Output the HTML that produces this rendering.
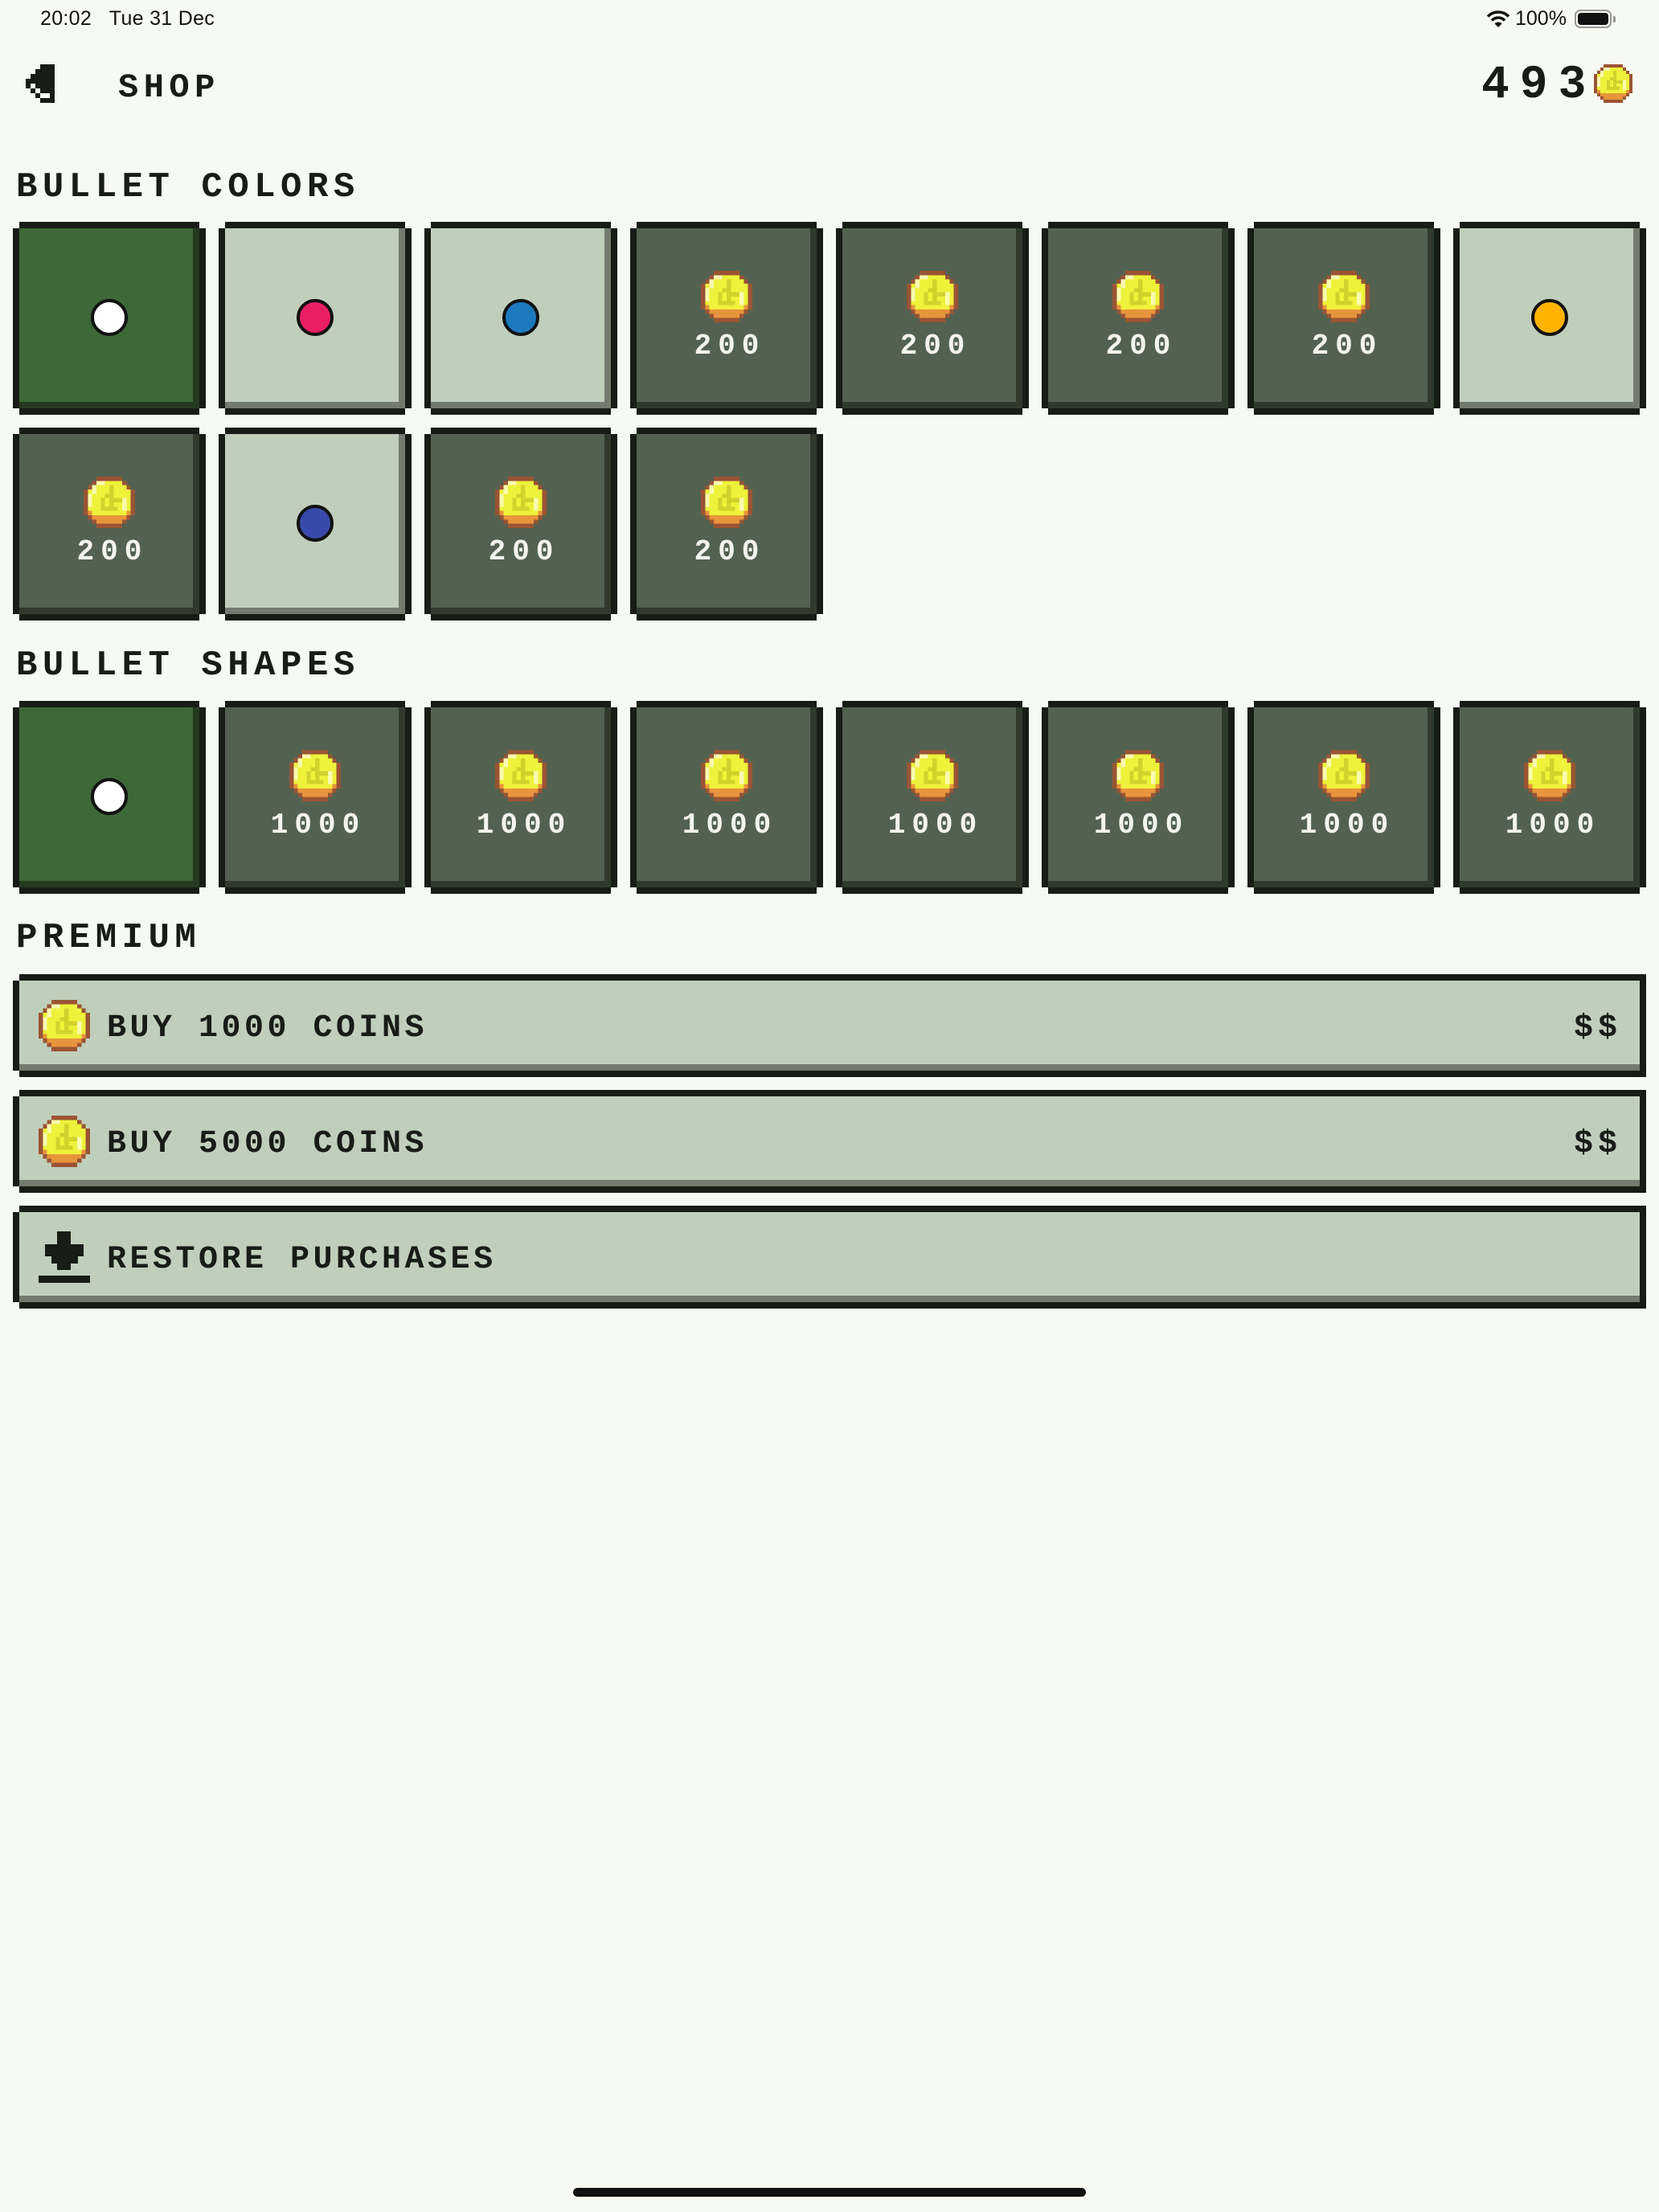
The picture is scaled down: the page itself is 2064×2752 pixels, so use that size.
<!DOCTYPE html>
<html><head><meta charset="utf-8"><style>
*{margin:0;padding:0;box-sizing:border-box}
body{width:2064px;height:2752px;background:#f7faf2;position:relative;overflow:hidden;font-family:"Liberation Mono",monospace;color:#181c17}
.a{position:absolute}
.h{position:absolute;font-weight:bold;font-size:44px;line-height:44px;letter-spacing:6.5px;white-space:nowrap}
.t{position:absolute;width:240px;height:240px}
.t .f1{position:absolute;left:8px;top:0;width:224px;height:240px;background:#181c17}
.t .f2{position:absolute;left:0;top:8px;width:240px;height:224px;background:#181c17}
.t .in{position:absolute;left:8px;top:8px;width:224px;height:224px}
.g .in{background:#3d6837;box-shadow:inset -8px -8px 0 #24391f}
.l .in{background:#c0cfbb;box-shadow:inset -8px -8px 0 #737a6e}
.d .in{background:#536250;box-shadow:inset -8px -8px 0 #2f3a2d}
.dot{position:absolute;left:97px;top:96px;width:46px;height:46px;border-radius:50%;border:4px solid #111}
.cn{position:absolute;left:88px;top:61px;width:64px;height:64px}
.pr{position:absolute;left:0;width:240px;top:137px;text-align:center;color:#f4f4ee;font-weight:bold;font-size:36px;line-height:36px;letter-spacing:8px;padding-left:8px}
.b{position:absolute;left:16px;width:2032px;height:128px}
.b .f1{position:absolute;left:8px;top:0;right:0;height:128px;background:#181c17}
.b .f2{position:absolute;left:0;top:8px;right:0;height:112px;background:#181c17}
.b .in{position:absolute;left:8px;top:8px;right:8px;height:112px;background:#c0cfbb;box-shadow:inset 0 -8px 0 #737a6e}
.bt{position:absolute;left:117px;top:48px;font-weight:bold;font-size:40px;line-height:40px;letter-spacing:4.5px;white-space:nowrap}
.bc{position:absolute;left:32px;top:32px;width:64px;height:64px}
.dl{position:absolute;right:30px;top:48px;font-weight:bold;font-size:40px;line-height:40px;letter-spacing:6px}
</style></head><body>
<svg width="0" height="0" style="position:absolute"><defs><symbol id="coin" viewBox="0 0 12 12" shape-rendering="crispEdges">
<rect x="3" y="1" width="6" height="10" fill="#eef23a"/><rect x="2" y="2" width="8" height="8" fill="#eef23a"/><rect x="1" y="3" width="10" height="6" fill="#eef23a"/>
<rect x="3" y="1" width="2" height="1" fill="#fafab0"/><rect x="2" y="2" width="1" height="2" fill="#fafab0"/><rect x="1" y="4" width="1" height="3" fill="#fafab0"/><rect x="9" y="5" width="1" height="3" fill="#fafab0"/>
<rect x="6" y="2" width="1" height="6" fill="#d2d22c"/><rect x="5" y="4" width="1" height="1" fill="#d2d22c"/><rect x="4" y="5" width="1" height="3" fill="#d2d22c"/><rect x="7" y="5" width="2" height="1" fill="#d2d22c"/><rect x="5" y="7" width="3" height="1" fill="#d2d22c"/>
<rect x="3" y="10" width="6" height="1" fill="#e8943c"/><rect x="1" y="8" width="1" height="1" fill="#e8943c"/><rect x="10" y="8" width="1" height="1" fill="#e8943c"/><rect x="2" y="9" width="8" height="1" fill="#e8943c"/>
<g fill="#9a5434"><rect x="3" y="0" width="6" height="1"/><rect x="2" y="1" width="1" height="1"/><rect x="9" y="1" width="1" height="1"/><rect x="1" y="2" width="1" height="1"/><rect x="10" y="2" width="1" height="1"/><rect x="0" y="3" width="1" height="6"/><rect x="11" y="3" width="1" height="6"/><rect x="1" y="9" width="1" height="1"/><rect x="10" y="9" width="1" height="1"/><rect x="2" y="10" width="1" height="1"/><rect x="9" y="10" width="1" height="1"/><rect x="3" y="11" width="6" height="1"/></g>
</symbol></defs></svg>

<div class="a" style="left:50px;top:8px;font-family:'Liberation Sans',sans-serif;font-size:25px;line-height:30px;color:#111;letter-spacing:0.3px">20:02&nbsp;&nbsp;&nbsp;Tue 31 Dec</div>
<svg class="a" style="left:1849px;top:13px" width="30" height="21" viewBox="0 0 30 21"><path d="M2 7.5A18 18 0 0 1 28 7.5" stroke="#111" stroke-width="3.5" fill="none"/><path d="M7 12.5A11 11 0 0 1 23 12.5" stroke="#111" stroke-width="3.5" fill="none"/><path d="M15 21L10.5 16.5A6 6 0 0 1 19.5 16.5Z" fill="#111"/></svg>
<div class="a" style="left:1885px;top:8px;font-family:'Liberation Sans',sans-serif;font-size:25px;line-height:30px;color:#111">100%</div>
<div class="a" style="left:1959px;top:12px;width:46px;height:23px;border:2px solid #999;border-radius:7px;padding:2px"><div style="width:100%;height:100%;background:#111;border-radius:4px"></div></div>
<div class="a" style="left:2007px;top:20px;width:3px;height:8px;background:#999;border-radius:0 2px 2px 0"></div>

<svg class="a" style="left:32px;top:80px" width="36" height="48" viewBox="32 80 36 48" shape-rendering="crispEdges"><path fill="#181c17" d="M50 80H68V128H50V122H44V116H38V110H32V98H38V92H44V86H50Z"/><path fill="#fff" d="M38 104H44V110H50V116H62V122H50V116H44V110H38Z"/></svg>
<div class="h" style="left:147px;top:88px;font-size:42px;line-height:42px">SHOP</div>
<div class="a" style="left:1843px;top:78px;font-weight:bold;font-size:58px;line-height:58px;letter-spacing:13px">493</div>
<svg class="a" style="left:1983px;top:80px" width="48" height="48"><use href="#coin"/></svg>

<div class="h" style="left:20px;top:211px">BULLET COLORS</div>

<div class="t g" style="left:16px;top:276px"><div class="f1"></div><div class="f2"></div><div class="in"></div><div class="dot" style="background:#fff"></div></div>
<div class="t l" style="left:272px;top:276px"><div class="f1"></div><div class="f2"></div><div class="in"></div><div class="dot" style="background:#e91e63"></div></div>
<div class="t l" style="left:528px;top:276px"><div class="f1"></div><div class="f2"></div><div class="in"></div><div class="dot" style="background:#1e7abf"></div></div>
<div class="t d" style="left:784px;top:276px"><div class="f1"></div><div class="f2"></div><div class="in"></div><svg class="cn"><use href="#coin"/></svg><div class="pr">200</div></div>
<div class="t d" style="left:1040px;top:276px"><div class="f1"></div><div class="f2"></div><div class="in"></div><svg class="cn"><use href="#coin"/></svg><div class="pr">200</div></div>
<div class="t d" style="left:1296px;top:276px"><div class="f1"></div><div class="f2"></div><div class="in"></div><svg class="cn"><use href="#coin"/></svg><div class="pr">200</div></div>
<div class="t d" style="left:1552px;top:276px"><div class="f1"></div><div class="f2"></div><div class="in"></div><svg class="cn"><use href="#coin"/></svg><div class="pr">200</div></div>
<div class="t l" style="left:1808px;top:276px"><div class="f1"></div><div class="f2"></div><div class="in"></div><div class="dot" style="background:#ffb300"></div></div>

<div class="t d" style="left:16px;top:532px"><div class="f1"></div><div class="f2"></div><div class="in"></div><svg class="cn"><use href="#coin"/></svg><div class="pr">200</div></div>
<div class="t l" style="left:272px;top:532px"><div class="f1"></div><div class="f2"></div><div class="in"></div><div class="dot" style="background:#3949ab"></div></div>
<div class="t d" style="left:528px;top:532px"><div class="f1"></div><div class="f2"></div><div class="in"></div><svg class="cn"><use href="#coin"/></svg><div class="pr">200</div></div>
<div class="t d" style="left:784px;top:532px"><div class="f1"></div><div class="f2"></div><div class="in"></div><svg class="cn"><use href="#coin"/></svg><div class="pr">200</div></div>

<div class="h" style="left:20px;top:806px">BULLET SHAPES</div>

<div class="t g" style="left:16px;top:872px"><div class="f1"></div><div class="f2"></div><div class="in"></div><div class="dot" style="background:#fff"></div></div>
<div class="t d" style="left:272px;top:872px"><div class="f1"></div><div class="f2"></div><div class="in"></div><svg class="cn"><use href="#coin"/></svg><div class="pr">1000</div></div>
<div class="t d" style="left:528px;top:872px"><div class="f1"></div><div class="f2"></div><div class="in"></div><svg class="cn"><use href="#coin"/></svg><div class="pr">1000</div></div>
<div class="t d" style="left:784px;top:872px"><div class="f1"></div><div class="f2"></div><div class="in"></div><svg class="cn"><use href="#coin"/></svg><div class="pr">1000</div></div>
<div class="t d" style="left:1040px;top:872px"><div class="f1"></div><div class="f2"></div><div class="in"></div><svg class="cn"><use href="#coin"/></svg><div class="pr">1000</div></div>
<div class="t d" style="left:1296px;top:872px"><div class="f1"></div><div class="f2"></div><div class="in"></div><svg class="cn"><use href="#coin"/></svg><div class="pr">1000</div></div>
<div class="t d" style="left:1552px;top:872px"><div class="f1"></div><div class="f2"></div><div class="in"></div><svg class="cn"><use href="#coin"/></svg><div class="pr">1000</div></div>
<div class="t d" style="left:1808px;top:872px"><div class="f1"></div><div class="f2"></div><div class="in"></div><svg class="cn"><use href="#coin"/></svg><div class="pr">1000</div></div>

<div class="h" style="left:20px;top:1145px">PREMIUM</div>

<div class="b" style="top:1212px"><div class="f1"></div><div class="f2"></div><div class="in"></div><svg class="bc"><use href="#coin"/></svg><div class="bt">BUY 1000 COINS</div><div class="dl">$$</div></div>
<div class="b" style="top:1356px"><div class="f1"></div><div class="f2"></div><div class="in"></div><svg class="bc"><use href="#coin"/></svg><div class="bt">BUY 5000 COINS</div><div class="dl">$$</div></div>
<div class="b" style="top:1500px"><div class="f1"></div><div class="f2"></div><div class="in"></div>
<svg class="a" style="left:32px;top:32px" width="64" height="64" viewBox="48 1532 64 64" shape-rendering="crispEdges"><path fill="#181c17" d="M71 1532H88V1548H104V1563H97V1572H88V1580H71V1572H64V1563H56V1548H71Z"/><rect x="48" y="1587" width="64" height="9" fill="#181c17"/></svg>
<div class="bt">RESTORE PURCHASES</div></div>

<div class="a" style="left:713px;top:2722px;width:638px;height:11px;background:#111;border-radius:6px"></div>
</body></html>
